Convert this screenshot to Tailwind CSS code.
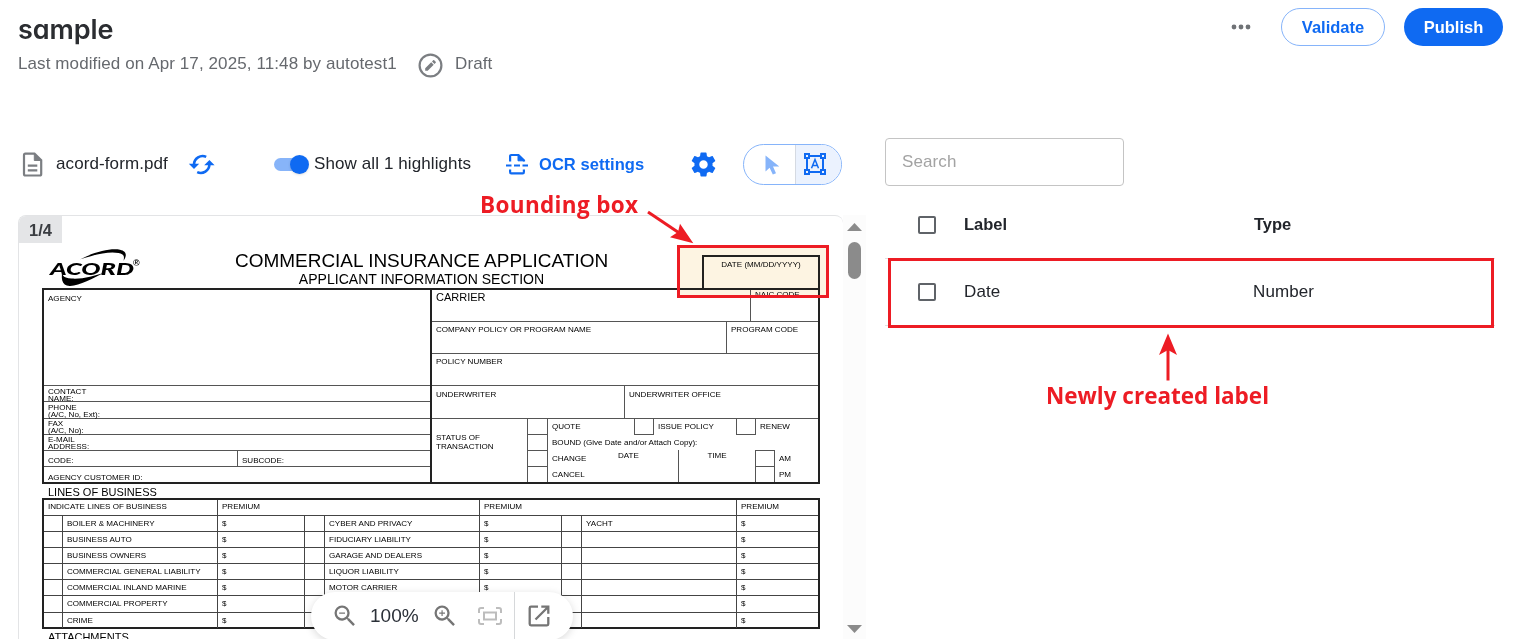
<!DOCTYPE html>
<html lang="en">
<head>
    <meta charset="UTF-8">
    <meta name="viewport" content="width=device-width, initial-scale=1.0">
    <script src="https://cdn.jsdelivr.net/npm/@tailwindcss/browser@4"></script>

    <title>sample</title>
</head>

<body class="relative h-screen overflow-hidden bg-white font-['Liberation_Sans',Arial,sans-serif] text-[17px] leading-6 tracking-[0.1px] text-[#22252b]">

    <!-- Page header -->
    <header class="flex h-[138px] items-start justify-between pl-[18px] pr-[10px]">
        <div>
            <h1 class="mt-3 h-9 font-['Inter',sans-serif] text-[27px] leading-9 font-semibold tracking-[-0.1px] text-[#2b2d31] [font-feature-settings:'cv11']">sample</h1>
            <div class="mt-[2px] flex h-7 items-center text-[#66696e]">
                <span class="w-[379px] whitespace-nowrap">Last modified on Apr 17, 2025, 11:48 by autotest1</span>
                <svg class="ml-[21px] mt-[3px]" width="25" height="25" viewBox="0 0 25 25" fill="none">
                    <circle cx="12.5" cy="12.5" r="10.9" stroke="#7b7e82" stroke-width="2.2"/>
                    <path d="M7.2 15.300v2.500h2.500l6-6-2.500-2.500zM14 8.500l2.500 2.500 1.200-1.200c.3-.3.3-.7 0-1l-1.500-1.500c-.3-.3-.7-.3-1 0z" fill="#7b7e82"/>
                </svg>
                <span class="ml-[12px]">Draft</span>
            </div>
        </div>
        <div class="flex items-center pt-2">
            <svg class="mr-[30px]" width="20" height="6" viewBox="0 0 20 6" fill="#6f7276">
                <circle cx="3" cy="3" r="2.4"/>
                <circle cx="10" cy="3" r="2.4"/>
                <circle cx="17" cy="3" r="2.4"/>
            </svg>
            <button class="mr-[19px] h-[38px] w-[104px] rounded-full border border-[#86b4fa] pb-px text-[16.5px] font-bold tracking-normal text-[#0f6af2]">Validate</button>
            <button class="h-[38px] w-[99px] rounded-full bg-[#0f6af2] pb-px text-[16.5px] font-bold tracking-normal text-white">Publish</button>
        </div>
    </header>

    <main class="flex">
        <!-- Document side -->
        <section class="w-[866px] shrink-0">
            <div class="flex h-[77px] items-start pl-[22px] pt-[6px]">
                <div class="flex h-[41px] items-center whitespace-nowrap">
                    <svg width="21" height="25" viewBox="0 0 21 25" fill="none" stroke="#7b7e82" stroke-width="2.2">
                        <path d="M2 3.2C2 2.3 2.6 1.6 3.4 1.6H12.5L19.2 8.3V22c0 .9-.6 1.5-1.4 1.5H3.4C2.6 23.500 2 22.900 2 22z"/>
                        <path d="M12.300 2v6.500h6.700z" fill="#7b7e82" stroke-width="1"/>
                        <path d="M5.800 13.700h9.500M5.800 18.300h9.500"/>
                    </svg>
                    <span class="ml-[13px] w-[120px] pb-[2px]">acord-form.pdf</span>
                    <svg class="ml-[12px]" width="27" height="21" viewBox="0 0 27 21" fill="none" stroke="#0f6af2" stroke-width="2.600">
                        <path d="M18.200 2.900A8.600 8.600 0 0 0 6 10.500"/>
                        <path d="M9.200 18.100A8.600 8.600 0 0 0 21.400 10.500"/>
                        <path d="M.8 9.800h10.400L6 15zM16.200 11.200h10.400L21.400 6z" fill="#0f6af2" stroke="none"/>
                    </svg>
                    <div class="ml-[59px] flex h-5 w-[36px] items-center">
                        <div class="h-[13px] w-[30px] rounded-full bg-[#87b4f9]"></div>
                        <div class="-ml-[14px] h-[19px] w-[19px] shrink-0 rounded-full bg-[#0f6af2] shadow-sm"></div>
                    </div>
                    <span class="ml-[4px] w-[163px] pb-[2px]">Show all 1 highlights</span>
                    <svg class="mb-px ml-[29px]" width="22" height="22" viewBox="0 0 22 22" fill="none" stroke="#0f6af2" stroke-width="2.200">
                        <path d="M4.100 8.500V3.200Q4.100 2 5.300 2H12.500L18 7.500V8.500"/>
                        <path d="M12 2v5.800h6z" fill="#0f6af2" stroke-width="1"/>
                        <path d="M0 12.500h5.500M8 12.500h6M16.500 12.500h5.500"/>
                        <path d="M4.100 16.500v2.500Q4.100 20.400 5.300 20.400H16.700Q17.900 20.400 17.900 19v-2.500"/>
                    </svg>
                    <span class="ml-[11px] w-[111px] pb-[2px] text-[16.5px] font-bold tracking-[0.05px] text-[#0f6af2]">OCR settings</span>
                    <svg class="ml-[39px]" width="29" height="29" viewBox="0 0 24 24" fill="#0f6af2">
                        <path d="M19.430 12.980c.04-.32.07-.64.07-.98s-.03-.66-.07-.98l2.110-1.650c.19-.15.24-.42.12-.64l-2-3.460c-.12-.22-.39-.3-.61-.22l-2.490 1c-.52-.4-1.080-.73-1.690-.98l-.38-2.650C14.460 2.180 14.250 2 14 2h-4c-.25 0-.46.18-.49.42l-.38 2.650c-.61.25-1.170.59-1.690.98l-2.490-1c-.23-.09-.49 0-.61.22l-2 3.460c-.13.22-.07.49.12.64l2.110 1.650c-.04.32-.07.65-.07.98s.03.66.07.98l-2.110 1.650c-.19.15-.24.42-.12.64l2 3.460c.12.22.39.3.61.22l2.490-1c.52.4 1.080.73 1.690.98l.38 2.650c.03.24.24.42.49.42h4c.25 0 .46-.18.49-.42l.38-2.650c.61-.25 1.170-.59 1.690-.98l2.490 1c.23.09.49 0 .61-.22l2-3.460c.12-.22.07-.49-.12-.64l-2.110-1.650zM12 15.500c-1.930 0-3.500-1.570-3.500-3.500s1.570-3.500 3.500-3.500 3.500 1.570 3.500 3.500-1.570 3.500-3.500 3.500z"/>
                    </svg>
                    <div class="ml-[25px] flex h-[41px] w-[99px] overflow-hidden rounded-full border border-[#86b4fa]">
                        <div class="flex w-[52px] items-center justify-center border-r border-[#d5dae2] pl-[6px]">
                            <svg width="15" height="20" viewBox="0 0 15 20" fill="#86b4fa">
                                <path d="M.5.500V16.500L4.600 12.700 7.800 19.600 11 18.200 8 11.500H14.300z"/>
                            </svg>
                        </div>
                        <div class="flex flex-1 items-center bg-[#ebf2fe] pb-px pl-[7px]">
                            <svg width="24" height="24" viewBox="0 0 24 24" fill="none" stroke="#0f6af2" stroke-width="2">
                                <path d="M2 2h4v4H2zM18 2h4v4h-4zM2 18h4v4H2zM18 18h4v4h-4z"/>
                                <path d="M7 4h10M7 20h10M4 7v10M20 7v10"/>
                                <path d="M8.500 16.200 12 7.500l3.500 8.700M9.800 13.500h4.400" stroke-width="1.500"/>
                            </svg>
                        </div>
                    </div>
                </div>
            </div>

            <!-- Viewer -->
            <div class="flex h-[424px] pl-[18px]">
                <div class="relative w-[825px] overflow-hidden rounded-t-lg border-t border-l border-[#e3e4e6] tracking-normal text-black">

                    <div class="absolute top-0 left-0 flex h-[27px] w-[43px] items-center justify-center bg-[#e4e5e7] text-[16.5px] font-bold text-[#3a3d42]">1/4</div>

                    <div class="ml-[23px] w-[778px] text-[8.05px] leading-[8px] whitespace-nowrap">
                        <!-- Form heading -->
                        <div class="flex h-[72px]">
                            <svg class="mt-[32px] ml-[7px]" width="94" height="40" viewBox="0 0 94 40">
                                <path d="M31 11.500C46 3.500 62 0 71 1.800c7 1.500 7 6.200 3.500 11 1-4.300.8-6.600-5-7.800C60 3 46 6.500 31 11.500z"/>
                                <path d="M13 18.500c-2.500 8.500-1.500 11.500 8.500 12.300 11 .8 24-2.600 34-6.300C44 30.500 30 38 20 38.500c-9 .4-10.500-8-7-20z" transform="translate(2 1) scale(.96)"/>
                                <text x="1" y="26.500" textLength="84" lengthAdjust="spacingAndGlyphs" font-family="Lato, sans-serif" font-weight="900" font-style="italic" font-size="17">ACORD</text>
                                <text x="84" y="18" font-family="Liberation Sans, sans-serif" font-weight="700" font-size="9">®</text>
                            </svg>
                            <div class="ml-[92px] w-[373px] pt-[34px] text-center">
                                <div class="text-[18.98px] leading-[21px]">COMMERCIAL INSURANCE APPLICATION</div>
                                <div class="text-[14.05px] leading-[16px]">APPLICANT INFORMATION SECTION</div>
                            </div>
                            <div class="mt-[39px] ml-auto h-[33px] w-[118px] border-2 border-b-0 border-[#222] pt-[4px] text-center">DATE (MM/DD/YYYY)</div>
                        </div>

                        <!-- Applicant block -->
                        <div class="flex h-[196px] border-2 border-[#222]">
                            <div class="w-[386px] [&>div]:border-[#555] [&>div]:pl-1">
                                <div class="h-[95px] pt-[5px]">AGENCY</div>
                                <div class="h-4 border-t pt-[2px] leading-[7px]">CONTACT<br>NAME:</div>
                                <div class="h-[17px] border-t pt-[2px] leading-[7px]">PHONE<br>(A/C, No, Ext):</div>
                                <div class="h-4 border-t pt-[1px] leading-[7px]">FAX<br>(A/C, No):</div>
                                <div class="h-4 border-t pt-[1px] leading-[7px]">E-MAIL<br>ADDRESS:</div>
                                <div class="flex h-4 border-t">
                                    <div class="w-[189px] pt-[6px]">CODE:</div>
                                    <div class="border-l border-[#555] pl-1 pt-[6px]">SUBCODE:</div>
                                </div>
                                <div class="h-4 border-t pt-[7px]">AGENCY CUSTOMER ID:</div>
                            </div>
                            <div class="w-[388px] border-l-2 border-[#222] [&_div]:border-[#555]">
                                <div class="flex h-[31px]">
                                    <div class="flex-1 pt-[1px] pl-1 text-[11px] leading-[12px]">CARRIER</div>
                                    <div class="w-[68px] border-l pl-1 pt-px">NAIC CODE</div>
                                </div>
                                <div class="flex h-8 border-t">
                                    <div class="flex-1 pl-1 pt-[4px]">COMPANY POLICY OR PROGRAM NAME</div>
                                    <div class="w-[92px] border-l pl-1 pt-[4px]">PROGRAM CODE</div>
                                </div>
                                <div class="h-8 border-t pl-1 pt-[4px]">POLICY NUMBER</div>
                                <div class="flex h-[33px] border-t">
                                    <div class="w-[192px] pl-1 pt-[5px]">UNDERWRITER</div>
                                    <div class="flex-1 border-l pl-1 pt-[5px]">UNDERWRITER OFFICE</div>
                                </div>
                                <div class="flex h-[64px] border-t">
                                    <div class="w-[95px] pt-[14px] pl-1 leading-[9px]">STATUS OF<br>TRANSACTION</div>
                                    <div class="w-5 border-l">
                                        <div class="h-[15px]"></div>
                                        <div class="h-4 border-t"></div>
                                        <div class="h-4 border-t"></div>
                                        <div class="h-4 border-t"></div>
                                    </div>
                                    <div class="flex-1 border-l">
                                        <div class="flex h-4 items-center">
                                            <div class="w-[86px] pl-1">QUOTE</div>
                                            <div class="h-4 w-5 border-x border-b"></div>
                                            <div class="w-[82px] pl-1">ISSUE POLICY</div>
                                            <div class="h-4 w-5 border-x border-b"></div>
                                            <div class="pl-1">RENEW</div>
                                        </div>
                                        <div class="h-[15px] pt-[4px] pl-1">BOUND (Give Date and/or Attach Copy):</div>
                                        <div class="flex h-8">
                                            <div class="w-[70px] pl-1">
                                                <div class="pt-[5px]">CHANGE</div>
                                                <div class="pt-[8px]">CANCEL</div>
                                            </div>
                                            <div class="w-[60px] pt-[2px]">DATE</div>
                                            <div class="w-[77px] border-l pt-[2px] text-center">TIME</div>
                                            <div class="w-5 border-x border-t">
                                                <div class="h-[15px]"></div>
                                                <div class="border-t"></div>
                                            </div>
                                            <div class="pl-1">
                                                <div class="pt-[5px]">AM</div>
                                                <div class="pt-[8px]">PM</div>
                                            </div>
                                        </div>
                                    </div>
                                </div>
                            </div>
                        </div>

                        <div class="h-[14px] pl-[6px] pt-[2px] text-[11px] leading-[12px]">LINES OF BUSINESS</div>

                        <!-- Lines of business -->
                        <div class="h-[131px] border-2 border-[#222]">
                            <div class="grid h-[15px] grid-cols-[173px_262px_257px_82px] items-stretch [&>div]:border-[#444] [&>div]:pt-[3px]">
                                <div class="pl-1">INDICATE LINES OF BUSINESS</div>
                                <div class="border-l pl-1">PREMIUM</div>
                                <div class="border-l pl-1">PREMIUM</div>
                                <div class="border-l pl-1">PREMIUM</div>
                            </div>
                            <div id="lines"></div>
                        </div>

                        <div class="pt-[2px] pl-[6px] text-[11px] leading-[12px]">ATTACHMENTS</div>
                    </div>

                    <!-- Highlight over the date field -->
                    <div class="absolute top-[29px] left-[658px] h-[53px] w-[152px] bg-[#fdf4e2] mix-blend-multiply"></div>
                    <div class="absolute top-[29px] left-[658px] h-[53px] w-[152px] border-[3px] border-[#ed1c24]"></div>

                    <!-- Zoom bar -->
                    <div class="absolute top-[376px] left-[292px] flex h-12 w-[262px] items-center rounded-full bg-white text-[19px] text-[#2b3038] shadow-[0_2px_8px_rgba(0,0,0,0.15)]">
                        <svg class="ml-[20px]" width="28" height="28" viewBox="0 0 24 24" fill="#757575">
                            <path d="M15.500 14h-.79l-.28-.27A6.470 6.470 0 0 0 16 9.500 6.500 6.500 0 1 0 9.500 16c1.610 0 3.090-.59 4.230-1.570l.27.28v.79l5 4.990L20.490 19zm-6 0C7.010 14 5 11.990 5 9.500S7.010 5 9.500 5 14 7.010 14 9.500 11.990 14 9.500 14zM7 9h5v1H7z"/>
                        </svg>
                        <span class="ml-[11px] w-[51px]">100%</span>
                        <svg class="ml-[10px]" width="28" height="28" viewBox="0 0 24 24" fill="#757575">
                            <path d="M15.500 14h-.79l-.28-.27A6.470 6.470 0 0 0 16 9.500 6.500 6.500 0 1 0 9.500 16c1.610 0 3.090-.59 4.230-1.570l.27.28v.79l5 4.990L20.490 19zm-6 0C7.010 14 5 11.990 5 9.500S7.010 5 9.500 5 14 7.010 14 9.500 11.990 14 9.500 14zM12 10h-2v2H9v-2H7V9h2V7h1v2h2z"/>
                        </svg>
                        <svg class="ml-[19px]" width="24" height="18" viewBox="0 0 24 18" fill="none" stroke="#bdbdbd" stroke-width="2">
                            <path d="M1 6V3q0-2 2-2h3M18 1h3q2 0 2 2v3M23 12v3q0 2-2 2h-3M6 17H3q-2 0-2-2v-3"/>
                            <path d="M6 5.500h12v7H6z"/>
                        </svg>
                        <div class="ml-[12px] h-12 w-px bg-[#d6d8da]"></div>
                        <svg class="ml-[13px]" width="22" height="22" viewBox="0 0 22 22" fill="none" stroke="#757575" stroke-width="2.300">
                            <path d="M10 1.700H3q-1.300 0-1.300 1.300v16q0 1.300 1.300 1.300h16q1.300 0 1.300-1.300v-7"/>
                            <path d="M13.300 1.700h7v7M20 2 7.500 14.500"/>
                        </svg>
                    </div>
                </div>

                <!-- Scrollbar -->
                <div class="flex w-[23px] flex-col items-center justify-between bg-[#fcfcfc] pt-[8px] pb-[6px]">
                    <div class="flex flex-col items-center">
                        <svg width="15" height="8" viewBox="0 0 15 8" fill="#8b8b8b"><path d="M7.500 0 15 8H0z"/></svg>
                        <div class="mt-[11px] h-[37px] w-[13px] rounded-full bg-[#8b8b8b]"></div>
                    </div>
                    <svg width="15" height="8" viewBox="0 0 15 8" fill="#8b8b8b"><path d="M0 0h15L7.500 8z"/></svg>
                </div>
            </div>
        </section>

        <!-- Labels side -->
        <section class="ml-[19px] w-[610px]">
            <input type="text" placeholder="Search" class="block h-12 w-[239px] rounded border border-[#c4c4c4] px-4 pb-px tracking-[0.1px] placeholder:text-[#a3a3a3]">
            <div class="flex h-[72px] items-center pt-[6px] text-[16.5px] font-bold tracking-normal">
                <div class="ml-[33px] mt-[-1px] h-[18px] w-[18px] rounded-[2px] border-2 border-[#5f6368]"></div>
                <span class="ml-[28px] w-[290px] pb-[3px]">Label</span>
                <span class="pb-[3px]">Type</span>
            </div>
            <div class="flex h-[68px] items-center border-y border-[#e0e0e0]">
                <div class="ml-[33px] h-[18px] w-[18px] rounded-[2px] border-2 border-[#5f6368]"></div>
                <span class="ml-[28px] w-[289px] pb-px">Date</span>
                <span class="pb-px">Number</span>
            </div>
        </section>
    </main>

    <!-- Annotations -->
    <div class="absolute top-[258px] left-[888px] h-[70px] w-[606px] border-[3px] border-[#ed1c24]"></div>
    <div class="absolute top-[190px] left-[480px] font-['Open_Sans',sans-serif] text-[22.500px] leading-[30px] font-bold tracking-[0.35px] whitespace-nowrap text-[#ed1c24]">Bounding box</div>
    <svg class="absolute top-[208px] left-[644px]" width="52" height="38" viewBox="0 0 52 38" fill="#ed1c24">
        <path d="M4 4 36 25.500" stroke="#ed1c24" stroke-width="3"/>
        <path d="M49.300 35.300 36 15.700 34 24 26 29.300z"/>
    </svg>
    <div class="absolute top-[381px] left-[1046px] font-['Open_Sans',sans-serif] text-[22.500px] leading-[30px] font-bold tracking-normal whitespace-nowrap text-[#ed1c24]">Newly created label</div>
    <svg class="absolute top-[333px] left-[1158px]" width="20" height="48" viewBox="0 0 20 48" fill="#ed1c24">
        <path d="M10 15v32.500" stroke="#ed1c24" stroke-width="3"/>
        <path d="M10 .5 19 22 10 17 1 22z"/>
    </svg>
</body>

<script>
    const lines = [
        ["BOILER & MACHINERY", "CYBER AND PRIVACY", "YACHT"],
        ["BUSINESS AUTO", "FIDUCIARY LIABILITY", ""],
        ["BUSINESS OWNERS", "GARAGE AND DEALERS", ""],
        ["COMMERCIAL GENERAL LIABILITY", "LIQUOR LIABILITY", ""],
        ["COMMERCIAL INLAND MARINE", "MOTOR CARRIER", ""],
        ["COMMERCIAL PROPERTY", "", ""],
        ["CRIME", "", ""],
    ];

    function createLine(names, index) {
        const row = document.createElement("div");
        row.className = "grid grid-cols-[18px_155px_87px_20px_155px_82px_20px_155px_82px] border-t border-[#444]";
        row.classList.add(index === 5 ? "h-[17px]" : "h-[16px]");

        names.forEach((name, i) => {
            ["", name, "$"].forEach((text, j) => {
                const cell = document.createElement("div");
                cell.innerText = text;
                cell.className = "border-[#444] pt-[4px] pl-1";
                if (i + j > 0) cell.classList.add("border-l");
                row.appendChild(cell);
            });
        });

        return row;
    }

    const container = document.getElementById("lines");
    lines.forEach((names, index) => container.appendChild(createLine(names, index)));
</script>
</html>
